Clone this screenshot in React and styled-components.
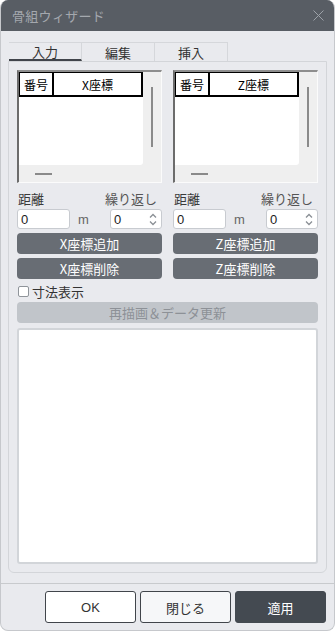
import React from "react";
import styled, { createGlobalStyle } from "styled-components";

const GlobalStyle = createGlobalStyle`
  html, body {
    margin: 0;
    padding: 0;
    background: #ffffff;
  }
  * {
    box-sizing: border-box;
  }
`;

const font = `"Noto Sans CJK JP", "Noto Sans", "Liberation Sans", sans-serif`;

const Window = styled.div`
  width: 335px;
  height: 631px;
  display: flex;
  flex-direction: column;
  border: 1px solid #c6c8cc;
  border-top: none;
  border-radius: 8px;
  overflow: hidden;
  background: #e9eaee;
  font-family: ${font};
  font-size: 13px;
  color: #333;
`;

const TitleBar = styled.div`
  height: 31px;
  flex: none;
  display: flex;
  align-items: center;
  justify-content: space-between;
  padding: 0 10px 0 11px;
  background: #585d64;
  color: #a4a8ae;
  font-size: 13px;
  letter-spacing: 0.3px;
`;

const Body = styled.div`
  flex: 1;
  display: flex;
  flex-direction: column;
  padding: 11px 7px 10px;
  min-height: 0;
`;

const Tabs = styled.div`
  display: flex;
  height: 19px;
  margin-left: 1px;
`;

const Tab = styled.div`
  width: 73px;
  display: flex;
  align-items: center;
  justify-content: center;
  border: 1px solid #d5d7db;
  border-bottom: ${(p) => (p.$active ? "2px solid #40444a" : "none")};
  border-left: ${(p) => (p.$active ? "none" : "1px solid #d5d7db")};
  color: #333;
  font-size: 13px;
  line-height: 1;
  & + & {
    border-left: none;
  }
`;

const Panel = styled.div`
  flex: 1;
  display: flex;
  flex-direction: column;
  border: 1px solid #d3d5d9;
  border-radius: 0 0 6px 6px;
  padding: 8px 8px 8px;
  min-height: 0;
`;

const Columns = styled.div`
  display: flex;
  gap: 11px;
`;

const Column = styled.div`
  width: 145px;
  display: flex;
  flex-direction: column;
`;

const GridFrame = styled.div`
  height: 113px;
  display: flex;
  flex-direction: column;
  background: #efefef;
  border-top: 2px solid #8e8e8e;
  border-left: 2px solid #6c6c6c;
  border-right: 1px solid #fbfbfb;
  border-bottom: 1px solid #fbfbfb;
`;

const GridMain = styled.div`
  flex: 1;
  display: flex;
`;

const Table = styled.div`
  width: 124px;
  background: #fff;
  border-bottom-right-radius: 3px;
`;

const HeadRow = styled.div`
  display: flex;
  height: 25px;
`;

const HeadCell = styled.div`
  width: ${(p) => p.$w}px;
  display: flex;
  align-items: center;
  justify-content: center;
  border: 1px solid #000;
  border-right-width: 2px;
  border-bottom-width: 2px;
  font-size: 12px;
  color: #000;
  & + & {
    border-left: none;
  }
`;

const VScroll = styled.div`
  flex: 1;
  display: flex;
  justify-content: center;
  padding-top: 15px;
`;

const VThumb = styled.div`
  width: 2px;
  height: 60px;
  background: #8a8a8a;
`;

const HScroll = styled.div`
  height: 17px;
  padding: 8px 0 0 16px;
`;

const HThumb = styled.div`
  width: 17px;
  height: 2px;
  background: #8a8a8a;
`;

const LabelRow = styled.div`
  display: flex;
  justify-content: space-between;
  align-items: center;
  height: 18px;
  margin-top: 6px;
  padding: 0 5px 0 1px;
  font-size: 13px;
  color: #3a3a3a;
`;

const RepeatLabel = styled.span`
  color: #555;
`;

const InputRow = styled.div`
  display: flex;
  align-items: center;
  height: 20px;
  margin-top: 2px;
`;

const Field = styled.div`
  width: ${(p) => p.$w}px;
  height: 20px;
  display: flex;
  align-items: center;
  justify-content: space-between;
  padding: 0 3px 0 3px;
  background: #fff;
  border: 1px solid #c8cbd0;
  border-radius: 3px;
  font-family: "Liberation Sans", sans-serif;
  font-size: 13px;
  color: #1d1d1d;
`;

const Unit = styled.span`
  margin-left: 8px;
  font-family: "Liberation Sans", sans-serif;
  font-size: 13px;
  color: #666;
`;

const Spacer = styled.div`
  flex: 1;
`;

const Arrows = styled.div`
  display: flex;
  flex-direction: column;
  gap: 3px;
  padding-right: 1px;
`;

const ActionButton = styled.div`
  height: 21px;
  margin-top: 4px;
  display: flex;
  align-items: center;
  justify-content: center;
  background: #686d74;
  color: #fff;
  border-radius: 4px;
  font-size: 13px;
`;

const CheckRow = styled.div`
  display: flex;
  align-items: center;
  gap: 3px;
  height: 18px;
  margin-top: 3px;
  padding-left: 1px;
  font-size: 13px;
  color: #333;
`;

const Box = styled.div`
  width: 11px;
  height: 11px;
  background: #fff;
  border: 1px solid #8f949a;
  border-radius: 2px;
`;

const DisabledButton = styled.div`
  height: 21px;
  margin-top: 2px;
  display: flex;
  align-items: center;
  justify-content: center;
  background: #c1c5ca;
  color: #8d9197;
  border-radius: 4px;
  font-size: 13px;
`;

const TextArea = styled.div`
  flex: 1;
  margin-top: 5px;
  background: #fff;
  border: 2px solid #d2d5d9;
  border-radius: 3px;
`;

const Footer = styled.div`
  height: 47px;
  flex: none;
  display: flex;
  justify-content: flex-end;
  gap: 4px;
  padding: 7px 8px 8px 0;
  border-top: 1px solid #c8cacd;
`;

const FooterButton = styled.div`
  width: 91px;
  height: 32px;
  display: flex;
  align-items: center;
  justify-content: center;
  border-radius: 3px;
  font-size: 13px;
  border: 1px solid ${(p) => (p.$primary ? "#444a51" : "#41454b")};
  background: ${(p) =>
    p.$primary ? "#444a51" : p.$soft ? "#f6f7f9" : "#ffffff"};
  color: ${(p) => (p.$primary ? "#fff" : "#333")};
  font-family: ${(p) => (p.$latin ? `"Liberation Sans", sans-serif` : font)};
`;

const CloseIcon = () => (
  <svg width="11" height="11" viewBox="0 0 11 11">
    <path d="M0.5 0.5 L10.5 10.5 M10.5 0.5 L0.5 10.5" stroke="#9da2a8" strokeWidth="1" />
  </svg>
);

const SpinArrows = () => (
  <Arrows>
    <svg width="8" height="5" viewBox="0 0 8 5">
      <path d="M1 4.5 L4 1.5 L7 4.5" fill="none" stroke="#8a8f95" strokeWidth="1.3" />
    </svg>
    <svg width="8" height="5" viewBox="0 0 8 5">
      <path d="M1 0.5 L4 3.5 L7 0.5" fill="none" stroke="#8a8f95" strokeWidth="1.3" />
    </svg>
  </Arrows>
);

const CoordGrid = ({ axis }) => (
  <GridFrame>
    <GridMain>
      <Table>
        <HeadRow>
          <HeadCell $w={35}>番号</HeadCell>
          <HeadCell $w={89}>{axis}座標</HeadCell>
        </HeadRow>
      </Table>
      <VScroll>
        <VThumb />
      </VScroll>
    </GridMain>
    <HScroll>
      <HThumb />
    </HScroll>
  </GridFrame>
);

const AxisColumn = ({ axis }) => (
  <Column>
    <CoordGrid axis={axis} />
    <LabelRow>
      <span>距離</span>
      <RepeatLabel>繰り返し</RepeatLabel>
    </LabelRow>
    <InputRow>
      <Field $w={53}>0</Field>
      <Unit>m</Unit>
      <Spacer />
      <Field $w={52}>
        0
        <SpinArrows />
      </Field>
    </InputRow>
    <ActionButton>{axis}座標追加</ActionButton>
    <ActionButton>{axis}座標削除</ActionButton>
  </Column>
);

export default function App() {
  return (
    <>
      <GlobalStyle />
      <Window>
        <TitleBar>
          <span>骨組ウィザード</span>
          <CloseIcon />
        </TitleBar>
        <Body>
          <Tabs>
            <Tab $active>入力</Tab>
            <Tab>編集</Tab>
            <Tab>挿入</Tab>
          </Tabs>
          <Panel>
            <Columns>
              <AxisColumn axis="X" />
              <AxisColumn axis="Z" />
            </Columns>
            <CheckRow>
              <Box />
              <span>寸法表示</span>
            </CheckRow>
            <DisabledButton>再描画＆データ更新</DisabledButton>
            <TextArea />
          </Panel>
        </Body>
        <Footer>
          <FooterButton $latin>OK</FooterButton>
          <FooterButton $soft>閉じる</FooterButton>
          <FooterButton $primary>適用</FooterButton>
        </Footer>
      </Window>
    </>
  );
}
